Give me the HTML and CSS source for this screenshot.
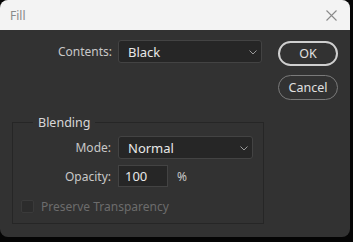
FILE: index.html
```html
<!DOCTYPE html>
<html lang="en">
<head>
  <meta charset="UTF-8" />
  <title>Fill</title>
  <link rel="stylesheet" href="styles.css">
</head>
<body>
  <div class="dialog">
    <div class="title-bar">
      <span class="title">Fill</span>
      <svg class="close" width="11" height="11" viewBox="0 0 11 11">
        <path d="M0.5 0.5 L10.5 10.5 M10.5 0.5 L0.5 10.5" stroke="#8a8a8a" stroke-width="1.1" fill="none"/>
      </svg>
    </div>

    <div class="content">
      <div class="form">
        <div class="row">
          <label class="label">Contents:</label>
          <div class="select wide">
            <span>Black</span>
            <svg class="chevron" width="8" height="5" viewBox="0 0 8 5"><path d="M0.5 0.5 L4 4 L7.5 0.5" stroke="#9a9a9a" fill="none"/></svg>
          </div>
        </div>

        <fieldset class="group">
          <legend>Blending</legend>
          <div class="row">
            <label class="label inner">Mode:</label>
            <div class="select">
              <span>Normal</span>
              <svg class="chevron" width="8" height="5" viewBox="0 0 8 5"><path d="M0.5 0.5 L4 4 L7.5 0.5" stroke="#9a9a9a" fill="none"/></svg>
            </div>
          </div>
          <div class="row opacity-row">
            <label class="label inner">Opacity:</label>
            <div class="text-input">100</div>
            <span class="unit">%</span>
          </div>
          <div class="check-row">
            <span class="checkbox"></span>
            <span class="disabled">Preserve Transparency</span>
          </div>
        </fieldset>
      </div>

      <div class="buttons">
        <button class="btn primary">OK</button>
        <button class="btn">Cancel</button>
      </div>
    </div>
  </div>
</body>
</html>
```

FILE: styles.css
```css
body {
  margin: 0;
  background: #050505;
  font-family: "Noto Sans", "Open Sans", sans-serif;
  font-size: 12px;
  color: #c8c8c8;
}

.dialog {
  width: 350px;
  height: 237px;
  background: #323232;
  border-radius: 8px;
  overflow: hidden;
}

.title-bar {
  height: 30px;
  background: #f3f3f3;
  display: flex;
  align-items: center;
  justify-content: space-between;
  padding: 0 13px 0 10px;
}

.title {
  color: #8a8a8a;
  font-size: 12px;
}

.content {
  display: flex;
  padding: 10px 0 0 12px;
}

.form {
  width: 252px;
}

.row {
  display: flex;
  align-items: center;
  gap: 6px;
}

.label {
  width: 100px;
  text-align: right;
}

.label.inner {
  width: 92px;
}

.select {
  height: 21px;
  flex: 1;
  background: #262626;
  border: 1px solid #434343;
  border-radius: 3px;
  display: flex;
  align-items: center;
  justify-content: space-between;
  padding: 0 4px 0 9px;
  color: #e8e8e8;
  font-size: 13px;
}

.select.wide {
  margin-right: 2px;
}

.chevron {
  margin-top: 1px;
}

.group {
  margin: 51px 0 0 0;
  padding: 5px 10px 8px 6px;
  border: 1px solid #262626;
  min-width: 0;
}

.group legend {
  margin-left: 14px;
  padding: 0 5px;
  color: #d8d8d8;
  font-size: 12.5px;
}

.group .select {
  margin-left: 1px;
}

.opacity-row {
  margin-top: 6px;
}

.text-input {
  width: 42px;
  height: 20px;
  margin-left: 1px;
  background: #262626;
  border: 1px solid #434343;
  padding-left: 6px;
  display: flex;
  align-items: center;
  color: #e8e8e8;
  font-size: 13px;
}

.unit {
  margin-left: 3px;
}

.check-row {
  display: flex;
  align-items: center;
  gap: 7px;
  margin-top: 11px;
  margin-left: 2px;
}

.checkbox {
  width: 11px;
  height: 11px;
  background: #2c2c2c;
  border: 1px solid #3a3a3a;
  border-radius: 2px;
}

.disabled {
  color: #6c6c6c;
}

.buttons {
  display: flex;
  flex-direction: column;
  gap: 9px;
  margin-left: 14px;
  margin-top: 1px;
}

.btn {
  width: 60px;
  height: 25px;
  border-radius: 13px;
  background: #323232;
  border: 1px solid #7a7a7a;
  color: #e0e0e0;
  font-family: inherit;
  font-size: 12.5px;
  padding: 0;
}

.btn.primary {
  border: 2px solid #cfcfcf;
}
```
